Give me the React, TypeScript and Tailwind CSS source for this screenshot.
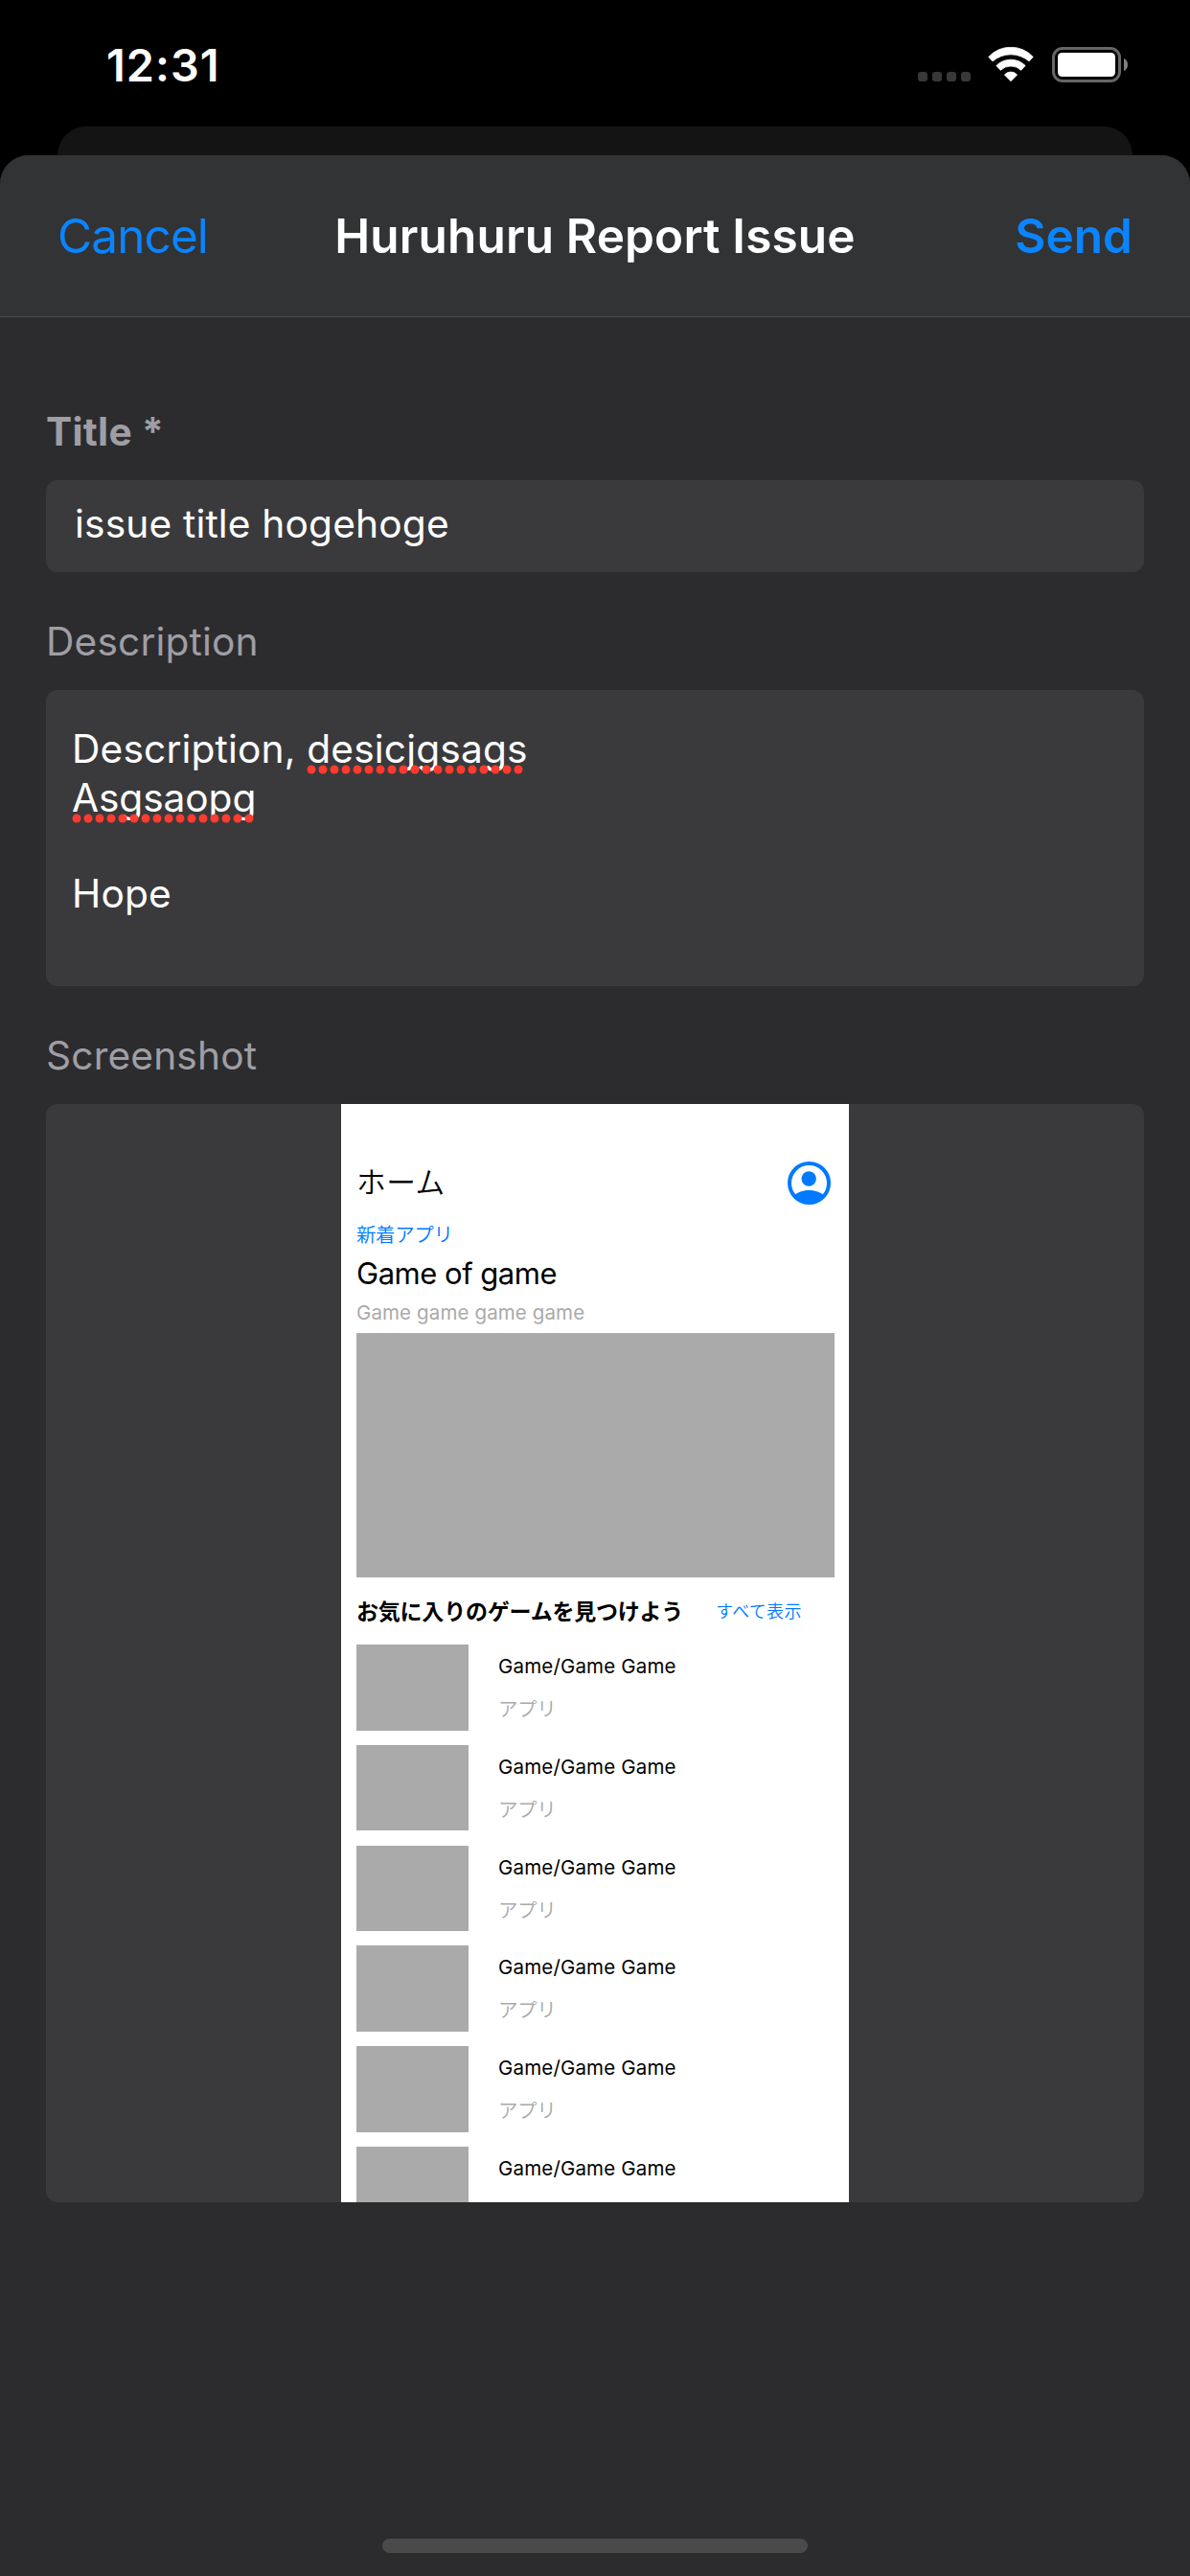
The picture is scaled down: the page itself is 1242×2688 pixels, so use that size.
import React from 'react';

function StatusBar() {
  return (
    <div className="flex h-[132px] items-start justify-between pl-[111px] pr-[65px]">
      <div className="mt-[38px] text-[46.8px] leading-[60px] font-semibold tracking-[1.04px] text-white">
        12:31
      </div>
      <div className="mt-[49px] flex items-start">
        <div className="mt-[26px] mr-[18px] flex gap-[5px]">
          {[0, 1, 2, 3].map((i) => (
            <span key={i} className="size-[10px] rounded-[3px] bg-[#383838]" />
          ))}
        </div>
        <svg width="48" height="37" viewBox="0 0 48 37" fill="#fff" stroke="#fff" strokeWidth="0.8" strokeLinejoin="round">
          <path d="M0.8 10.4A31.5 31.5 0 0 1 47.2 10.4L43 14.9A29.2 29.2 0 0 0 5 14.9Z" />
          <path d="M8.9 19.5A21.2 21.2 0 0 1 39.1 19.5L34.7 24.3A15.4 15.4 0 0 0 13.3 24.3Z" />
          <path d="M17.4 29A8.8 8.8 0 0 1 30.6 29L24 35.7Z" />
        </svg>
        <svg className="ml-[19px]" width="79" height="37" viewBox="0 0 79 37">
          <rect x="1.5" y="1.5" width="69" height="34" rx="9.5" fill="none" stroke="#666" strokeWidth="3" />
          <rect x="6" y="6" width="60" height="25" rx="4.5" fill="#fff" />
          <path d="M75 12C77.6 13 79 15.4 79 18.5S77.6 24 75 25Z" fill="#808080" />
        </svg>
      </div>
    </div>
  );
}

function Misspelled({ text, dots }: { text: string; dots: number }) {
  return (
    <span className="relative inline-block">
      {text}
      <svg
        className="absolute top-[41px] left-[0px]"
        width={dots * 12}
        height="10"
        viewBox={`0 0 ${dots * 12} 10`}
      >
        {Array.from({ length: dots }, (_, i) => (
          <circle key={i} cx={5 + i * 12} cy="5" r="4.5" fill="#ff3b30" />
        ))}
      </svg>
    </span>
  );
}

function AccountIcon() {
  return (
    <svg width="45" height="45" viewBox="0 0 45 45">
      <circle cx="22.5" cy="22.5" r="20.5" fill="none" stroke="#007aff" strokeWidth="4" />
      <circle cx="22.2" cy="18" r="7.7" fill="#007aff" />
      <path d="M7.5 35C11 31.5 17 30 22.2 30S34 31.5 37.5 35A20.5 20.5 0 0 1 7.5 35Z" fill="#007aff" />
    </svg>
  );
}

function GameRow({ genre }: { genre?: string }) {
  return (
    <div className="flex h-[89.6px] shrink-0">
      <div className="w-[117px] bg-[#aaaaaa]" />
      <div className="ml-[31px]">
        <div className="h-[45px] text-[20.5px] leading-[45px] tracking-[0.17px] text-black">Game/Game Game</div>
        {genre && (
          <div className="h-[44px] font-['Noto_Sans_CJK_JP',sans-serif] text-[20.5px] leading-[43px] font-[350] tracking-[-0.4px] text-[#aaaaaa]">
            {genre}
          </div>
        )}
      </div>
    </div>
  );
}

const GENRES = ['アプリ', 'アプリ', 'アプリ', 'アプリ', 'アプリ', undefined];

function AppPreview() {
  return (
    <div className="flex h-full w-[530px] flex-col overflow-hidden bg-white pt-[60px] pr-[15px] pl-[16px] text-black">
      <div className="flex h-[45px] shrink-0 items-center justify-between pr-[4px]">
        <div className="font-['Noto_Sans_CJK_JP',sans-serif] text-[30.7px] leading-[40px] font-[350] tracking-[0.5px]">
          <span className="relative top-[-3px]">ホーム</span>
        </div>
        <AccountIcon />
      </div>
      <div className="mt-[15px] h-[30px] shrink-0 font-['Noto_Sans_CJK_JP',sans-serif] text-[20.5px] leading-[30px] font-[350] tracking-[-0.4px] text-[#007aff]">
        新着アプリ
      </div>
      <div className="mt-[7px] h-[40px] shrink-0 text-[31px] leading-[40px] tracking-[-0.49px]">Game of game</div>
      <div className="mt-[6px] h-[30px] shrink-0 text-[20.5px] leading-[30px] tracking-[0.12px] text-[#aaaaaa]">
        Game game game game
      </div>
      <div className="mt-[6px] h-[255px] shrink-0 bg-[#aaaaaa]" />
      <div className="mt-[14px] flex h-[40px] shrink-0 items-center font-['Noto_Sans_CJK_JP',sans-serif] leading-[40px]">
        <span className="text-[23px] font-bold tracking-[-0.21px]">お気に入りのゲームを見つけよう</span>
        <span className="ml-[34px] text-[18px] font-[350] tracking-[0.3px] text-[#007aff]">すべて表示</span>
      </div>
      <div className="mt-[16px] flex shrink-0 flex-col gap-[15.2px]">
        {GENRES.map((genre, i) => (
          <GameRow key={i} genre={genre} />
        ))}
      </div>
    </div>
  );
}

export default function App() {
  return (
    <div className="flex h-[2688px] w-[1242px] flex-col overflow-hidden bg-black font-['Inter',sans-serif]">
      <StatusBar />
      <div className="mx-[60px] h-[60px] shrink-0 rounded-t-[30px] bg-[#141414]" />
      <div className="relative -mt-[30px] flex flex-1 flex-col overflow-hidden rounded-t-[30px] bg-[#2c2c2e]">
        <header className="grid h-[169px] shrink-0 grid-cols-[1fr_auto_1fr] items-center border-b border-[#4a4a4c] bg-[#323334] px-[60px] text-[49.5px] leading-[60px]">
          <button className="justify-self-start tracking-[-0.9px] text-[#0a84ff]">Cancel</button>
          <h1 className="font-semibold tracking-[0.15px] text-white">Huruhuru Report Issue</h1>
          <button className="justify-self-end font-semibold text-[#0a84ff]">Send</button>
        </header>

        <main className="flex flex-1 flex-col px-[48px] pt-[95px] text-[40.7px] leading-[50px] tracking-[0.15px]">
          <div className="font-bold tracking-[0.3px] text-[#9f9ea5]">Title *</div>
          <div className="mt-[25px] h-[96px] rounded-[12px] bg-[#3a3a3c] pt-[21px] pl-[30px] text-white">
            issue title hogehoge
          </div>

          <div className="mt-[48px] text-[#9f9ea5]">Description</div>
          <div className="mt-[25px] h-[309px] rounded-[12px] bg-[#3a3a3c] pt-[37px] pl-[27px] text-white">
            <div className="h-[51px]">
              Description, <Misspelled text="desicjgsags" dots={19} />
            </div>
            <div className="h-[50px] tracking-[-0.1px]">
              <Misspelled text="Asgsaopg" dots={16} />
            </div>
            <div className="h-[50px]" />
            <div>Hope</div>
          </div>

          <div className="mt-[48px] text-[#9f9ea5]">Screenshot</div>
          <div className="mt-[25px] flex h-[1146px] justify-center rounded-[12px] bg-[#3a3a3c] leading-normal tracking-normal">
            <AppPreview />
          </div>
        </main>

        <div className="mb-[24px] h-[15px] w-[444px] shrink-0 self-center rounded-full bg-[#4a4a4a]" />
      </div>
    </div>
  );
}
